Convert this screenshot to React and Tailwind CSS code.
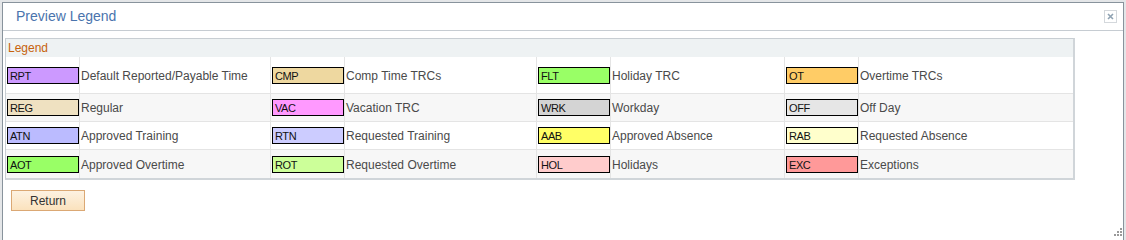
import React from "react";

const rows = [
    [
        ["RPT", "bg-[#cc99ff]", "Default Reported/Payable Time"],
        ["CMP", "bg-[#eed8a0]", "Comp Time TRCs"],
        ["FLT", "bg-[#99ff66]", "Holiday TRC"],
        ["OT", "bg-[#ffcc66]", "Overtime TRCs"],
    ],
    [
        ["REG", "bg-[#efe1c1]", "Regular"],
        ["VAC", "bg-[#ff99ff]", "Vacation TRC"],
        ["WRK", "bg-[#d4d4d4]", "Workday"],
        ["OFF", "bg-[#e6e6e6]", "Off Day"],
    ],
    [
        ["ATN", "bg-[#bbbbff]", "Approved Training"],
        ["RTN", "bg-[#ccccff]", "Requested Training"],
        ["AAB", "bg-[#ffff66]", "Approved Absence"],
        ["RAB", "bg-[#ffffcc]", "Requested Absence"],
    ],
    [
        ["AOT", "bg-[#99ff66]", "Approved Overtime"],
        ["ROT", "bg-[#ccff99]", "Requested Overtime"],
        ["HOL", "bg-[#ffcccc]", "Holidays"],
        ["EXC", "bg-[#ff9999]", "Exceptions"],
    ],
];

const rowStyles = [
    "h-[37px] bg-white border-b border-[#e4e4e4]",
    "h-[28px] bg-[#f7f7f7] border-b border-[#e4e4e4]",
    "h-[28px] bg-white border-b border-[#e4e4e4]",
    "h-[28px] bg-[#f7f7f7]",
];

const Swatch = ({ code, color }) => (
    <div className={`ml-[1px] w-[72px] h-[17px] border border-black ${color} flex items-center pl-[2px] pt-[2px] text-[11px] tracking-[-0.4px] text-[#111] leading-none`}>
        {code}
    </div>
);

const App = () => {
    return (
        <div className="relative w-[1126px] h-[240px] overflow-hidden bg-[#e4e6e8] pt-[2px] pl-[2px] font-['Liberation_Sans',Arial,sans-serif]">
            <div className="w-[1122px] h-[260px] bg-white border-t border-l border-r border-[#88939c]">
                {/* title bar */}
                <div className="h-[28px] border-b border-[#c6ccd2] flex items-center justify-between pl-[13px] pr-[6px]">
                    <span className="text-[14px] text-[#4a74ad]">Preview Legend</span>
                    <div className="w-[13px] h-[13px] border border-[#d4d8dc] flex items-center justify-center">
                        <svg width="7" height="7" viewBox="0 0 7 7">
                            <path d="M1 1L6 6M6 1L1 6" stroke="#8fa2b2" strokeWidth="1.6" />
                        </svg>
                    </div>
                </div>

                <div className="pt-[7px] pl-[2px]">
                    {/* legend group */}
                    <div className="w-[1070px] border-t border-l border-[#c8ced3] border-r-2 border-b-2 border-r-[#d0d5d9] border-b-[#d0d5d9]">
                        <div className="h-[18px] bg-[#eef2f3] flex items-center pl-[2px] text-[12px] text-[#c7620c]">Legend</div>
                        {rows.map((row, i) => (
                            <div key={i} className={`grid grid-cols-[74px_191px_74px_192px_74px_174px_74px_214px] ${rowStyles[i]}`}>
                                {row.map(([code, color, label], j) => (
                                    <React.Fragment key={j}>
                                        <div className="flex items-center border-r border-[#e4e4e4]">
                                            <Swatch code={code} color={color} />
                                        </div>
                                        <div className={`flex items-center pl-[1px] pt-[1px] text-[12px] text-[#4a4a4a] ${j < 3 ? "border-r border-[#e4e4e4]" : ""}`}>
                                            {label}
                                        </div>
                                    </React.Fragment>
                                ))}
                            </div>
                        ))}
                    </div>

                    <button className="mt-[10px] ml-[6px] w-[74px] h-[21px] border border-[#dba874] bg-gradient-to-b from-[#fdf2e2] to-[#fbe2bd] text-[12px] text-[#333] flex items-center justify-center">
                        Return
                    </button>
                </div>
            </div>

            {/* resize grip */}
            <svg className="absolute left-[1113px] top-[227px]" width="10" height="10" viewBox="0 0 10 10">
                <rect x="7" y="1" width="2" height="2" fill="#9a9a9a" />
                <rect x="4" y="4" width="2" height="2" fill="#9a9a9a" />
                <rect x="7" y="4" width="2" height="2" fill="#9a9a9a" />
                <rect x="1" y="7" width="2" height="2" fill="#9a9a9a" />
                <rect x="4" y="7" width="2" height="2" fill="#9a9a9a" />
                <rect x="7" y="7" width="2" height="2" fill="#9a9a9a" />
            </svg>
        </div>
    );
};

export default App;
